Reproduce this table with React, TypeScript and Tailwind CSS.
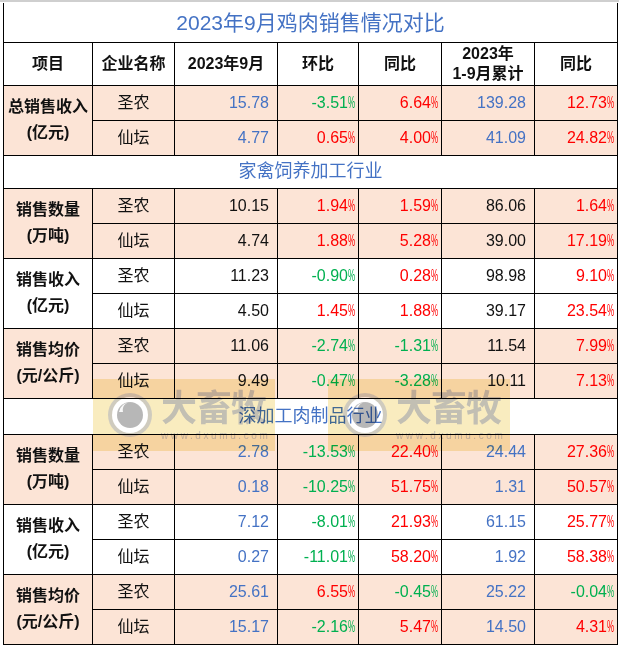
import React from 'react';

type C = 'k' | 'b' | 'r' | 'g';
const colorCls: Record<C, string> = {
  k: 'text-[#111111]',
  b: 'text-[#4472c4]',
  r: 'text-[#ff0000]',
  g: 'text-[#00b050]',
};

type Row = {
  name: string;
  v1: [string, C];
  p1: [string, C];
  p2: [string, C];
  v2: [string, C];
  p3: [string, C];
};

type Group = { label: [string, string]; bg: boolean; rows: [Row, Row] };

const r = (name: string, v1: [string, C], p1: [string, C], p2: [string, C], v2: [string, C], p3: [string, C]): Row => ({ name, v1, p1, p2, v2, p3 });

const total: Group = {
  label: ['总销售收入', '(亿元)'],
  bg: true,
  rows: [
    r('圣农', ['15.78', 'b'], ['-3.51', 'g'], ['6.64', 'r'], ['139.28', 'b'], ['12.73', 'r']),
    r('仙坛', ['4.77', 'b'], ['0.65', 'r'], ['4.00', 'r'], ['41.09', 'b'], ['24.82', 'r']),
  ],
};

const sec1: Group[] = [
  {
    label: ['销售数量', '(万吨)'],
    bg: true,
    rows: [
      r('圣农', ['10.15', 'k'], ['1.94', 'r'], ['1.59', 'r'], ['86.06', 'k'], ['1.64', 'r']),
      r('仙坛', ['4.74', 'k'], ['1.88', 'r'], ['5.28', 'r'], ['39.00', 'k'], ['17.19', 'r']),
    ],
  },
  {
    label: ['销售收入', '(亿元)'],
    bg: false,
    rows: [
      r('圣农', ['11.23', 'k'], ['-0.90', 'g'], ['0.28', 'r'], ['98.98', 'k'], ['9.10', 'r']),
      r('仙坛', ['4.50', 'k'], ['1.45', 'r'], ['1.88', 'r'], ['39.17', 'k'], ['23.54', 'r']),
    ],
  },
  {
    label: ['销售均价', '(元/公斤)'],
    bg: true,
    rows: [
      r('圣农', ['11.06', 'k'], ['-2.74', 'g'], ['-1.31', 'g'], ['11.54', 'k'], ['7.99', 'r']),
      r('仙坛', ['9.49', 'k'], ['-0.47', 'g'], ['-3.28', 'g'], ['10.11', 'k'], ['7.13', 'r']),
    ],
  },
];

const sec2: Group[] = [
  {
    label: ['销售数量', '(万吨)'],
    bg: true,
    rows: [
      r('圣农', ['2.78', 'b'], ['-13.53', 'g'], ['22.40', 'r'], ['24.44', 'b'], ['27.36', 'r']),
      r('仙坛', ['0.18', 'b'], ['-10.25', 'g'], ['51.75', 'r'], ['1.31', 'b'], ['50.57', 'r']),
    ],
  },
  {
    label: ['销售收入', '(亿元)'],
    bg: false,
    rows: [
      r('圣农', ['7.12', 'b'], ['-8.01', 'g'], ['21.93', 'r'], ['61.15', 'b'], ['25.77', 'r']),
      r('仙坛', ['0.27', 'b'], ['-11.01', 'g'], ['58.20', 'r'], ['1.92', 'b'], ['58.38', 'r']),
    ],
  },
  {
    label: ['销售均价', '(元/公斤)'],
    bg: true,
    rows: [
      r('圣农', ['25.61', 'b'], ['6.55', 'r'], ['-0.45', 'g'], ['25.22', 'b'], ['-0.04', 'g']),
      r('仙坛', ['15.17', 'b'], ['-2.16', 'g'], ['5.47', 'r'], ['14.50', 'b'], ['4.31', 'r']),
    ],
  },
];

const td = 'border border-black p-0';

function Num({ v }: { v: [string, C] }) {
  return <td className={`${td} text-right pr-[8px] ${colorCls[v[1]]}`}>{v[0]}</td>;
}

function Pct({ v }: { v: [string, C] }) {
  return (
    <td className={`${td} text-right pr-[3px] ${colorCls[v[1]]}`}>
      {v[0]}
      <span className="inline-block w-[7px] scale-x-50 origin-left text-left">%</span>
    </td>
  );
}

function GroupRows({ g }: { g: Group }) {
  const bg = g.bg ? 'bg-[#fce4d6]' : 'bg-white';
  return (
    <>
      {g.rows.map((row, i) => (
        <tr key={i} className={`h-[35px] ${bg}`}>
          {i === 0 && (
            <td rowSpan={2} className={`${td} text-center font-bold leading-[26px] text-[#111111]`}>
              <div>{g.label[0]}</div>
              <div>{g.label[1]}</div>
            </td>
          )}
          <td className={`${td} text-center text-[#111111]`}>{row.name}</td>
          <Num v={row.v1} />
          <Pct v={row.p1} />
          <Pct v={row.p2} />
          <Num v={row.v2} />
          <Pct v={row.p3} />
        </tr>
      ))}
    </>
  );
}

function Section({ title, h }: { title: string; h: string }) {
  return (
    <tr className={`${h} bg-white`}>
      <td colSpan={7} className={`${td} text-center text-[18px] text-[#4472c4]`}>
        {title}
      </td>
    </tr>
  );
}

function Watermark({ left }: { left: string }) {
  return (
    <div className={`absolute top-[377px] ${left} w-[182px] h-[72px] bg-[rgba(240,208,96,0.4)] mix-blend-multiply pointer-events-none`}>
      <svg className="absolute left-[14px] top-[13px]" width="46" height="46" viewBox="0 0 46 46">
        <circle cx="23" cy="23" r="22" fill="rgba(190,190,190,0.7)" />
        <circle cx="23" cy="23" r="18" fill="rgba(255,255,255,1)" />
        <circle cx="23" cy="23" r="13" fill="rgba(170,170,170,0.85)" />
        <path d="M12 20 A12 12 0 0 1 24 10 A8 8 0 0 0 16 20 Z" fill="rgba(255,255,255,0.9)" />
      </svg>
      <div className="absolute left-[68px] top-[10px] text-[36px] leading-[40px] font-bold text-[rgba(175,175,175,0.75)] tracking-[-1px]">
        大畜牧
      </div>
      <div className="absolute left-[68px] top-[52px] text-[10px] leading-[10px] tracking-[2.6px] text-[rgba(175,175,175,0.75)]">
        www.dxumu.com
      </div>
    </div>
  );
}

export default function App() {
  return (
    <div
      className="relative w-[619px] h-[647px] bg-white overflow-hidden border-t-2 border-[#cfcfcf] pt-[1px]"
      style={{ fontFamily: '"Liberation Sans", "Noto Sans CJK SC", sans-serif' }}
    >
      <table className="ml-[3px] w-[614px] table-fixed border-collapse text-[16px]">
        <colgroup>
          <col className="w-[89px]" />
          <col className="w-[82px]" />
          <col className="w-[103px]" />
          <col className="w-[81px]" />
          <col className="w-[83px]" />
          <col className="w-[93px]" />
          <col className="w-[83px]" />
        </colgroup>
        <tbody>
          <tr className="h-[39px] bg-white">
            <td colSpan={7} className="border-x border-b border-black p-0 text-center text-[21px] text-[#4472c4]">
              2023年9月鸡肉销售情况对比
            </td>
          </tr>
          <tr className="h-[43px] bg-white font-bold text-[#111111]">
            <td className={`${td} text-center`}>项目</td>
            <td className={`${td} text-center`}>企业名称</td>
            <td className={`${td} text-center`}>2023年9月</td>
            <td className={`${td} text-center`}>环比</td>
            <td className={`${td} text-center`}>同比</td>
            <td className={`${td} text-center leading-[20px]`}>
              <div>2023年</div>
              <div>1-9月累计</div>
            </td>
            <td className={`${td} text-center`}>同比</td>
          </tr>
          <GroupRows g={total} />
          <Section title="家禽饲养加工行业" h="h-[33px]" />
          {sec1.map((g, i) => (
            <GroupRows key={i} g={g} />
          ))}
          <Section title="深加工肉制品行业" h="h-[36px]" />
          {sec2.map((g, i) => (
            <GroupRows key={i} g={g} />
          ))}
        </tbody>
      </table>
      <Watermark left="left-[93px]" />
      <Watermark left="left-[328px]" />
    </div>
  );
}
